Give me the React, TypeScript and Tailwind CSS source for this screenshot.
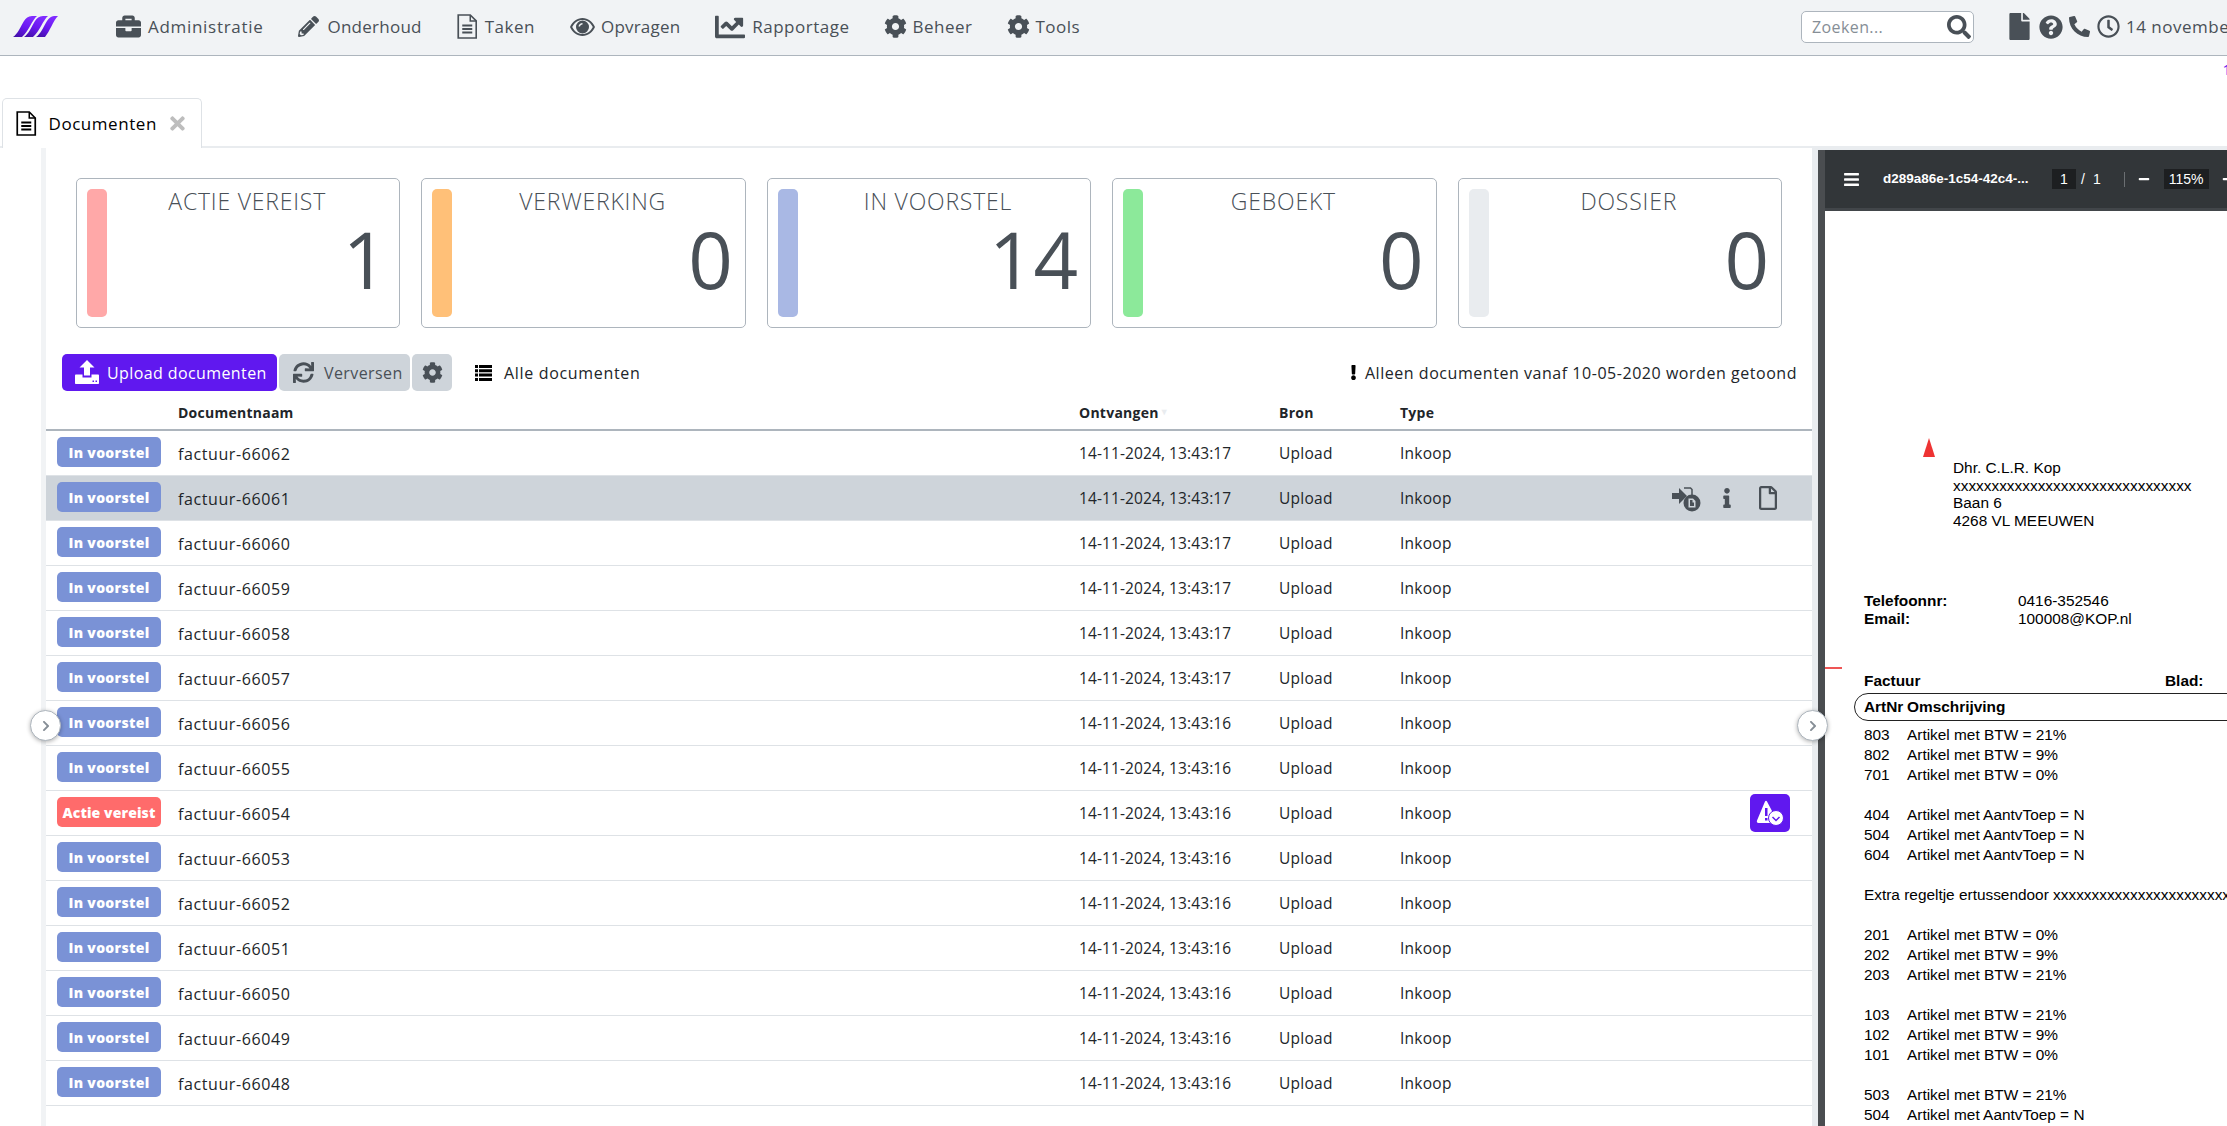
import React from "react";
import {
  FaBriefcase, FaPencilAlt, FaChartLine, FaCog, FaSearch, FaFile, FaQuestionCircle,
  FaPhoneAlt, FaRegClock, FaSync, FaExclamation, FaInfo, FaRegFile, FaTimes, FaChevronRight, FaBars, FaMinus,
} from "react-icons/fa";

const FileTextIcon = ({ size = 24, color = "currentColor" }: { size?: number; color?: string }) => (
  <svg width={size * 0.82} height={size} viewBox="0 0 20 25" fill="none" stroke={color} className="shrink-0">
    <path d="M1 1H13L19 7V24H1Z" strokeWidth="1.700" />
    <path d="M13 1V7H19" strokeWidth="1.500" />
    <path d="M5 11.500H15M5 15H15M5 18.500H15" strokeWidth="1.800" />
  </svg>
);

const EyeIcon = ({ size = 24 }: { size?: number }) => (
  <svg width={size} height={size * 0.72} viewBox="0 0 25 18" className="shrink-0" fill="currentColor">
    <path fillRule="evenodd" d="M12.500 0C7 0 2.500 3.500 0 9C2.500 14.500 7 18 12.500 18C18 18 22.500 14.500 25 9C22.500 3.500 18 0 12.500 0ZM12.500 2C17 2 20.500 4.500 22.800 9C20.500 13.500 17 16 12.500 16C8 16 4.500 13.500 2.200 9C4.500 4.500 8 2 12.500 2Z" />
    <path fillRule="evenodd" d="M12.500 2.500A6.500 6.500 0 1 0 12.500 15.500A6.500 6.500 0 1 0 12.500 2.500ZM12.500 5C10.500 5 8.800 6.500 8.500 8.500H10C10.300 7.300 11.200 6.500 12.500 6.500Z" />
  </svg>
);

const ListIcon = () => (
  <svg width="17" height="16" viewBox="0 0 17 16" fill="black" className="shrink-0">
    <path d="M0 0H3V3H0ZM4 0H17V3H4ZM0 4.300H3V7.300H0ZM4 4.300H17V7.300H4ZM0 8.600H3V11.600H0ZM4 8.600H17V11.600H4ZM0 13H3V16H0ZM4 13H17V16H4Z" />
  </svg>
);

const nav: { t: string; i: React.ReactNode; w: string; k: string }[] = [
  { t: "Administratie", i: <FaBriefcase size={25} />, w: "w-[32px]", k: "tracking-[0.7px]" },
  { t: "Onderhoud", i: <FaPencilAlt size={21} />, w: "w-[29px]", k: "tracking-[0.25px]" },
  { t: "Taken", i: <FileTextIcon size={25} />, w: "w-[28px]", k: "tracking-[0.5px]" },
  { t: "Opvragen", i: <EyeIcon size={25} />, w: "w-[31px]", k: "tracking-[0.2px]" },
  { t: "Rapportage", i: <FaChartLine size={30} />, w: "w-[37px]", k: "tracking-[0.5px]" },
  { t: "Beheer", i: <FaCog size={23} />, w: "w-[28px]", k: "tracking-[0.5px]" },
  { t: "Tools", i: <FaCog size={23} />, w: "w-[28px]", k: "tracking-[0.5px]" },
];

const cards = [
  { t: "ACTIE VEREIST", n: 1, c: "bg-[#ffa8a8]" },
  { t: "VERWERKING", n: 0, c: "bg-[#ffc078]" },
  { t: "IN VOORSTEL", n: 14, c: "bg-[#a9b8e4]" },
  { t: "GEBOEKT", n: 0, c: "bg-[#8ce99a]" },
  { t: "DOSSIER", n: 0, c: "bg-[#e9ecef]" },
];

const rows = [
  ["66062", "17"], ["66061", "17"], ["66060", "17"], ["66059", "17"], ["66058", "17"],
  ["66057", "17"], ["66056", "16"], ["66055", "16"], ["66054", "16"], ["66053", "16"],
  ["66052", "16"], ["66051", "16"], ["66050", "16"], ["66049", "16"], ["66048", "16"],
];

const pdfLines: [string, string][] = [
  ["803", "Artikel met BTW = 21%"], ["802", "Artikel met BTW = 9%"], ["701", "Artikel met BTW = 0%"], ["", ""],
  ["404", "Artikel met AantvToep = N"], ["504", "Artikel met AantvToep = N"], ["604", "Artikel met AantvToep = N"], ["", ""],
  ["", "Extra regeltje ertussendoor xxxxxxxxxxxxxxxxxxxxxxxxxxxxxx"], ["", ""],
  ["201", "Artikel met BTW = 0%"], ["202", "Artikel met BTW = 9%"], ["203", "Artikel met BTW = 21%"], ["", ""],
  ["103", "Artikel met BTW = 21%"], ["102", "Artikel met BTW = 9%"], ["101", "Artikel met BTW = 0%"], ["", ""],
  ["503", "Artikel met BTW = 21%"], ["504", "Artikel met AantvToep = N"],
];

const Logo = () => (
  <svg width="45" height="21" viewBox="0 0 45 21" className="shrink-0">
    <defs>
      <linearGradient id="lg" x1="0" y1="1" x2="0.6" y2="0">
        <stop offset="0" stopColor="#3d0f9e" />
        <stop offset="0.55" stopColor="#6a17f0" />
        <stop offset="1" stopColor="#7f2bff" />
      </linearGradient>
    </defs>
    <path d="M0 21C4 19 8 10 11 5C13 2 15 .5 19 0H24C19 4 16 15 9 21Z" fill="url(#lg)" />
    <path d="M11 21C15 19 19 10 22 5C24 2 26 .5 30 0H35C30 4 27 15 20 21Z" fill="url(#lg)" />
    <path d="M23 21C27 19 31 10 34 5C36 2 38 .5 41 0H45C40 5 37 15 32 21Z" fill="url(#lg)" />
  </svg>
);

const UploadIcon = () => (
  <svg width="24" height="25" viewBox="0 0 24 25" fill="white" className="shrink-0">
    <path d="M12 0L19.500 7.500H15V15.500H9V7.500H4.500Z" />
    <path fillRule="evenodd" d="M1 14.500H7.500V17.500H16.500V14.500H23C23.600 14.500 24 15 24 15.500V23C24 23.600 23.600 24 23 24H1C.4 24 0 23.600 0 23V15.500C0 15 .4 14.500 1 14.500ZM17.500 20.500H19V22H17.500ZM20.500 20.500H22V22H20.500Z" />
  </svg>
);

const MoveIcon = () => (
  <svg width="29" height="27" viewBox="0 0 29 27" className="shrink-0" fill="#495057">
    <path d="M0 8H7V3L15 11L7 19V14H0Z" />
    <path d="M12 3H18.500L20 4.500V10" fill="none" stroke="#495057" strokeWidth="1.500" />
    <circle cx="20" cy="18" r="8.500" />
    <path d="M16.500 13.500H21L23.500 16V22.500H16.500Z" fill="#ced4da" />
    <path d="M18 15H20.500V17.500H22V21H18Z" fill="#495057" />
  </svg>
);

const AlertIcon = () => (
  <svg width="28" height="26" viewBox="0 0 28 26" className="shrink-0">
    <path d="M11 1.500L21 20.500C21.500 22 20.500 23 19.500 23H2.500C1 23 .5 22 1 20.500L9 1.500C9.500 .5 10.500 .5 11 1.500Z" fill="white" />
    <rect x="9" y="8" width="2.500" height="8" fill="#6018ef" />
    <rect x="9" y="18" width="2.500" height="2.500" fill="#6018ef" />
    <circle cx="20" cy="18" r="7.500" fill="white" stroke="#6018ef" strokeWidth="1" />
    <path d="M16.500 17L20 20.500L23.500 17" fill="none" stroke="#6018ef" strokeWidth="1.500" />
  </svg>
);

const Collapse = ({ side }: { side: string }) => (
  <div className={`absolute top-[710px] ${side} w-[31px] h-[31px] rounded-full bg-white border border-[#adb5bd] shadow-[0_1px_4px_rgba(0,0,0,0.3)] flex items-center justify-center z-10`}>
    <FaChevronRight size={12} color="#868e96" />
  </div>
);

const Badge = ({ danger }: { danger: boolean }) => (
  <span className={`w-[104px] h-[30px] rounded-[5px] flex items-center justify-center text-white font-extrabold ${danger ? "bg-[#ff6b6b] text-[14px] tracking-[0.1px]" : "bg-[#7a92d6] text-[14px] tracking-[0.3px]"}`}>
    {danger ? "Actie vereist" : "In voorstel"}
  </span>
);

export default function App() {
  return (
    <div className="relative w-[2227px] h-[1126px] overflow-hidden bg-white text-[#212529] font-['Open_Sans',sans-serif] text-[15.5px]">
      {/* navbar */}
      <header className="h-[56px] pb-[2px] bg-[#f1f3f5] border-b border-[#adb5bd] flex items-center pl-[13px] text-[#495057] whitespace-nowrap">
        <Logo />
        <nav className="flex items-center ml-[58px] gap-[35px] text-[17px]">
          {nav.map(({ t, i, w, k }) => (
            <div key={t} className="flex items-center">
              <span className={`${w} flex items-center`}>{i}</span>
              <span className={k}>{t}</span>
            </div>
          ))}
        </nav>
        <div className="ml-auto flex items-center shrink-0 w-[426px] overflow-hidden h-full">
          <div className="w-[173px] h-[32px] shrink-0 bg-white border border-[#adb5bd] rounded-[5px] flex items-center justify-between pl-[10px] pr-[2px]">
            <span className="text-[#868e96] text-[16px] tracking-[0.4px]">Zoeken...</span>
            <FaSearch size={24} color="#495057" />
          </div>
          <FaFile size={27} className="ml-[32px] shrink-0" />
          <FaQuestionCircle size={24} className="ml-[6px] shrink-0" />
          <FaPhoneAlt size={21} className="ml-[6px] shrink-0" />
          <FaRegClock size={23} className="ml-[7px] shrink-0" />
          <span className="ml-[6px] text-[17px] tracking-[0.5px]">14 november 2024</span>
        </div>
      </header>

      {/* tab strip */}
      <div className="relative h-[92px] border-b-2 border-[#e9ecef]">
        <span className="absolute right-[-4px] top-[2px] text-[#6018ef] text-[15px]">1</span>
        <div className="absolute left-[2px] bottom-[-2px] w-[200px] h-[50px] bg-white border border-b-0 border-[#dee2e6] rounded-t-[5px] flex items-center pl-[13px] text-black">
          <FileTextIcon size={25} />
          <span className="ml-[12px] text-[17px] tracking-[0.55px]">Documenten</span>
          <FaTimes size={21} color="#bdbdbd" className="ml-[10px]" />
        </div>
      </div>

      <div className="flex h-[978px]">
        {/* left: documents */}
        <main className="w-[1771px] ml-[41px] border-l-[5px] border-[#f1f3f5] shrink-0">
          <div className="grid grid-cols-5 gap-[21px] pt-[30px] pl-[30px] pr-[30px]">
            {cards.map((c) => (
              <div key={c.t} className="h-[150px] border border-[#adb5bd] rounded-[5px] flex pl-[10px] pr-[12px] py-[10px]">
                <div className={`w-[20px] h-full rounded-[5px] ${c.c}`} />
                <div className="flex-1 flex flex-col text-[#495057]">
                  <div className="text-center text-[23px] font-light leading-[30px] tracking-[0.8px] mt-[-3px]">{c.t}</div>
                  <div className="text-right text-[78px] leading-[90px] mt-[-2px]">{c.n}</div>
                </div>
              </div>
            ))}
          </div>

          <div className="h-[37px] mt-[26px] ml-[16px] mr-[15px] flex items-center text-[16px]">
            <button className="w-[215px] h-[37px] bg-[#6018ef] text-white rounded-[5px] flex items-center pl-[13px]">
              <UploadIcon />
              <span className="ml-[8px] tracking-[0.4px]">Upload documenten</span>
            </button>
            <button className="w-[131px] h-[37px] ml-[2px] bg-[#ced4da] text-[#495057] rounded-[5px] flex items-center pl-[14px]">
              <FaSync size={21} />
              <span className="ml-[10px] tracking-[0.4px]">Verversen</span>
            </button>
            <button className="w-[40px] h-[37px] ml-[2px] bg-[#ced4da] text-[#495057] rounded-[5px] flex items-center justify-center">
              <FaCog size={21} />
            </button>
            <span className="ml-[23px]"><ListIcon /></span>
            <span className="ml-[12px] tracking-[0.67px]">Alle documenten</span>
            <span className="ml-auto flex items-center">
              <FaExclamation size={15} className="text-black" />
              <span className="ml-[4px] tracking-[0.54px]">Alleen documenten vanaf 10-05-2020 worden getoond</span>
            </span>
          </div>

          <div className="grid grid-cols-[132px_901px_200px_121px_1fr] items-center h-[40px] pt-[4px] border-b-2 border-[#adb5bd] font-bold text-[14px] tracking-[0.25px]">
            <span />
            <span>Documentnaam</span>
            <span className="flex items-center">Ontvangen<span className="text-[#e9ecef] text-[9px] ml-[1px]">▼</span></span>
            <span>Bron</span>
            <span>Type</span>
          </div>

          {rows.map(([id, sec]) => {
            const selected = id === "66061";
            const danger = id === "66054";
            return (
              <div key={id} className={`grid grid-cols-[132px_901px_200px_121px_1fr] items-center h-[45px] border-b border-[#dee2e6] ${selected ? "bg-[#ced4da]" : ""}`}>
                <span className="pl-[11px] pb-[2px]"><Badge danger={danger} /></span>
                <span className="pt-[2px] text-[16px] tracking-[0.6px]">factuur-{id}</span>
                <span className="pt-[2px] tracking-[0.1px]">14-11-2024, 13:43:{sec}</span>
                <span className="pt-[2px] tracking-[0.25px]">Upload</span>
                <div className="flex items-center justify-between">
                  <span className="pt-[2px] tracking-[0.25px]">Inkoop</span>
                  {selected && (
                    <span className="flex items-center text-[#495057] mr-[32px]">
                      <MoveIcon />
                      <FaInfo size={20} className="ml-[16px]" />
                      <FaRegFile size={24} className="ml-[19px]" />
                    </span>
                  )}
                  {danger && (
                    <span className="w-[40px] h-[38px] mr-[22px] bg-[#6018ef] rounded-[5px] flex items-center justify-center">
                      <AlertIcon />
                    </span>
                  )}
                </div>
              </div>
            );
          })}
        </main>

        {/* right: pdf viewer */}
        <aside className="flex-1 border-l-[6px] border-t-2 border-[#e9ecef] min-w-0 overflow-hidden">
          <div className="h-full border-l-[7px] border-[#4a4d50] flex flex-col font-['Liberation_Sans',sans-serif]">
            <div className="h-[61px] shrink-0 bg-[#323639] border-b-[3px] border-[#42464a] flex items-center text-white whitespace-nowrap text-[14px]">
              <FaBars size={17} className="ml-[18px] shrink-0" />
              <span className="ml-[23px] font-bold w-[169px] shrink-0 text-[13.500px]">d289a86e-1c54-42c4-...</span>
              <span className="w-[24px] h-[20px] shrink-0 bg-[#1d1f21] flex items-center justify-center">1</span>
              <span className="ml-[5px]">/</span>
              <span className="ml-[8px]">1</span>
              <span className="ml-[23px] w-px h-[15px] shrink-0 bg-[#6b6f72]" />
              <FaMinus size={12} className="ml-[13px] shrink-0" />
              <span className="ml-[14px] w-[45px] h-[20px] shrink-0 bg-[#1d1f21] flex items-center justify-center">115%</span>
              <FaMinus size={12} className="ml-[13px] shrink-0" />
            </div>
            <div className="relative flex-1 bg-white pl-[39px] text-[15.400px] leading-[17.600px] text-black whitespace-nowrap">
              <div className="h-[226px]" />
              <svg width="12" height="19" viewBox="0 0 12 19" className="absolute left-[98px] top-[227px]"><path d="M6 0L12 19H0Z" fill="#ee3333" /></svg>
              <div className="pl-[89px] mt-[22px]">
                <div>Dhr. C.L.R. Kop</div>
                <div>xxxxxxxxxxxxxxxxxxxxxxxxxxxxxxx</div>
                <div>Baan 6</div>
                <div>4268 VL MEEUWEN</div>
              </div>
              <div className="mt-[63px] flex font-bold">
                <div className="w-[154px]"><div>Telefoonnr:</div><div>Email:</div></div>
                <div className="font-normal"><div>0416-352546</div><div>100008@KOP.nl</div></div>
              </div>
              <div className="absolute left-0 top-[456px] w-[17px] h-[2px] bg-[#ee5555]" />
              <div className="mt-[44px] flex font-bold">
                <span className="w-[301px]">Factuur</span><span>Blad:</span>
              </div>
              <div className="mt-[4px] ml-[-10px] w-[600px] h-[28px] border-[1.500px] border-[#222] rounded-l-[14px] flex items-center pl-[9px] font-bold">
                <span className="w-[43px]">ArtNr</span><span>Omschrijving</span>
              </div>
              <div className="mt-[4px] leading-[20px]">
                {pdfLines.map(([a, b], i) => (
                  <div key={i} className="flex h-[20px]"><span className="w-[43px]">{a}</span><span>{b}</span></div>
                ))}
              </div>
            </div>
          </div>
        </aside>
      </div>

      <Collapse side="left-[30px]" />
      <Collapse side="left-[1797px]" />
    </div>
  );
}
